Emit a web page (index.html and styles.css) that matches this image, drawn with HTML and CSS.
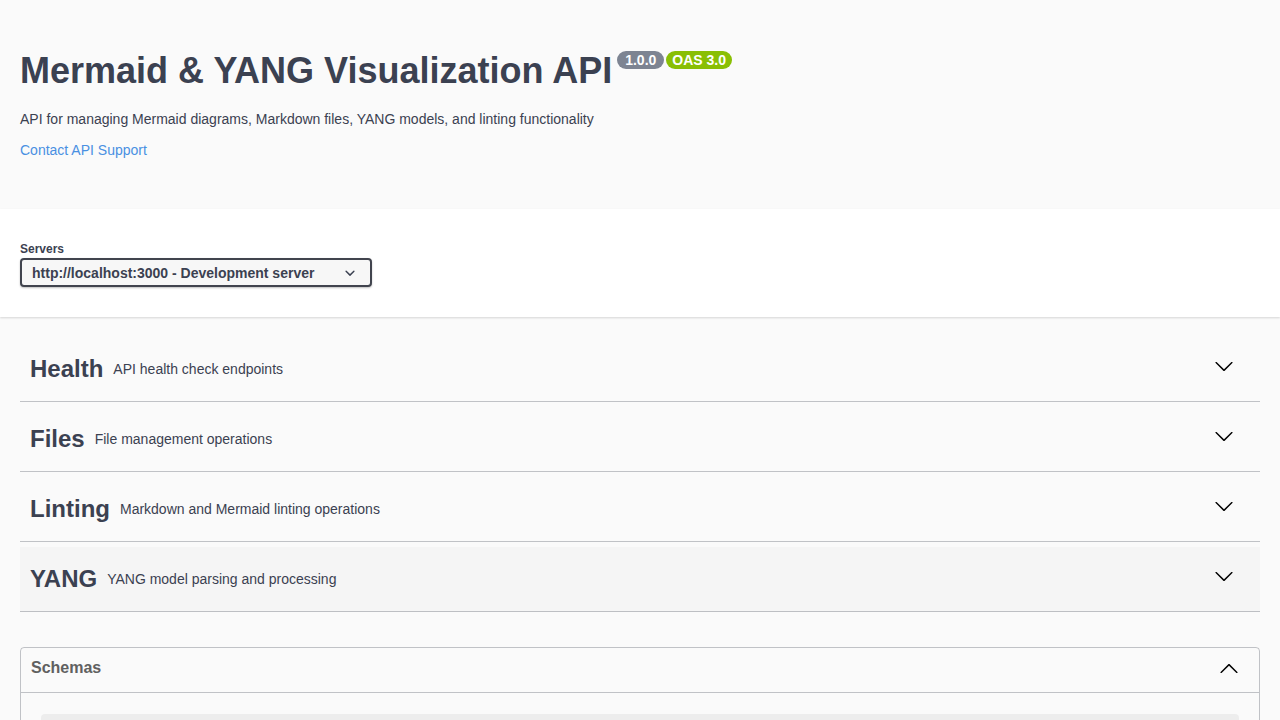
FILE: index.html
```html
<!DOCTYPE html>
<html lang="en">
<head>
<meta charset="utf-8">
<title>Mermaid &amp; YANG Visualization API</title>
<link rel="stylesheet" href="styles.css">
</head>
<body>
<div class="swagger">
  <section class="info wrapper">
    <hgroup class="main">
      <h1 class="title">Mermaid &amp; YANG Visualization API<small class="badge"><pre>1.0.0</pre></small><small class="badge oas"><pre>OAS 3.0</pre></small></h1>
    </hgroup>
    <p class="description">API for managing Mermaid diagrams, Markdown files, YANG models, and linting functionality</p>
    <div class="contact"><a class="link" href="#">Contact API Support</a></div>
  </section>

  <section class="scheme-container">
    <div class="wrapper">
      <label class="servers">
        <span class="servers-title">Servers</span>
        <span class="select-wrap">
          <select class="server-select">
            <option>http://localhost:3000 - Development server</option>
          </select>
          <svg class="select-arrow" width="20" height="20" viewBox="0 0 20 20"><path d="M13.418 7.859a.695.695 0 01.978 0 .68.68 0 010 .969l-3.908 3.83a.697.697 0 01-.979 0l-3.908-3.830a.68.68 0 010-.969.695.695 0 01.978 0L10 11z" fill="#3b4151"/></svg>
        </span>
      </label>
    </div>
  </section>

  <section class="wrapper operations">
    <div class="tag-section">
      <h3 class="tag">
        <span class="tag-name">Health</span><small class="tag-desc">API health check endpoints</small>
        <button class="expand" aria-label="expand"><svg width="20" height="20" viewBox="0 0 20 20"><path d="M17.418 6.109c.272-.268.709-.268.979 0s.271.701 0 .969l-7.908 7.83c-.27.268-.707.268-.979 0l-7.908-7.830c-.27-.268-.27-.701 0-.969.271-.268.709-.268.979 0L10 13.25l7.418-7.141z"/></svg></button>
      </h3>
    </div>
    <div class="tag-section">
      <h3 class="tag">
        <span class="tag-name">Files</span><small class="tag-desc">File management operations</small>
        <button class="expand" aria-label="expand"><svg width="20" height="20" viewBox="0 0 20 20"><path d="M17.418 6.109c.272-.268.709-.268.979 0s.271.701 0 .969l-7.908 7.83c-.27.268-.707.268-.979 0l-7.908-7.830c-.27-.268-.27-.701 0-.969.271-.268.709-.268.979 0L10 13.25l7.418-7.141z"/></svg></button>
      </h3>
    </div>
    <div class="tag-section">
      <h3 class="tag">
        <span class="tag-name">Linting</span><small class="tag-desc">Markdown and Mermaid linting operations</small>
        <button class="expand" aria-label="expand"><svg width="20" height="20" viewBox="0 0 20 20"><path d="M17.418 6.109c.272-.268.709-.268.979 0s.271.701 0 .969l-7.908 7.83c-.27.268-.707.268-.979 0l-7.908-7.830c-.27-.268-.27-.701 0-.969.271-.268.709-.268.979 0L10 13.25l7.418-7.141z"/></svg></button>
      </h3>
    </div>
    <div class="tag-section">
      <h3 class="tag hovered">
        <span class="tag-name">YANG</span><small class="tag-desc">YANG model parsing and processing</small>
        <button class="expand" aria-label="expand"><svg width="20" height="20" viewBox="0 0 20 20"><path d="M17.418 6.109c.272-.268.709-.268.979 0s.271.701 0 .969l-7.908 7.83c-.27.268-.707.268-.979 0l-7.908-7.830c-.27-.268-.27-.701 0-.969.271-.268.709-.268.979 0L10 13.25l7.418-7.141z"/></svg></button>
      </h3>
    </div>

    <div class="models">
      <h4 class="models-head">
        <span class="models-title">Schemas</span>
        <svg width="20" height="20" viewBox="0 0 20 20"><path d="M17.418 14.908c.272.268.709.268.979 0s.271-.701 0-.969l-7.908-7.83c-.27-.268-.707-.268-.979 0l-7.908 7.83c-.27.268-.27.701 0 .969.271.268.709.268.979 0L10 7.767l7.418 7.141z"/></svg>
      </h4>
      <div class="models-body">
        <div class="model-container"></div>
        <div class="model-container"></div>
        <div class="model-container"></div>
      </div>
    </div>
  </section>
</div>
</body>
</html>
```

FILE: styles.css
```css
html, body {
  margin: 0;
  padding: 0;
}
body {
  background: #fafafa;
  font-family: "Liberation Sans", Arial, Helvetica, sans-serif;
  color: #3b4151;
}
.wrapper {
  box-sizing: border-box;
  max-width: 1460px;
  margin: 0 auto;
  padding: 0 20px;
}

/* Info */
.info {
  padding-top: 50px;
  padding-bottom: 50px;
}
.info hgroup.main {
  margin: 0;
}
.title {
  margin: 0;
  font-size: 36px;
  line-height: 42px;
  font-weight: 700;
  color: #3b4151;
}
.badge {
  display: inline-block;
  vertical-align: top;
  margin: 1px 0 0 5px;
  padding: 2px 8px;
  border-radius: 57px;
  background: #7d8492;
}
.badge.oas {
  background: #89bf04;
  margin-left: 2px;
  padding: 2px 6px;
}
.badge pre {
  margin: 0;
  padding: 0;
  font-family: "Liberation Sans", Arial, Helvetica, sans-serif;
  font-size: 14px;
  line-height: 14px;
  font-weight: 700;
  color: #fff;
}
.description {
  margin: 17px 0 0;
  font-size: 14px;
  line-height: 21px;
}
.contact {
  margin-top: 12px;
  font-size: 14px;
  line-height: 17px;
}
.link {
  color: #4990e2;
  text-decoration: none;
}

/* Servers */
.scheme-container {
  background: #fff;
  box-shadow: 0 1px 2px 0 rgba(0, 0, 0, 0.15);
  padding: 30px 0;
  margin: 0 0 20px;
}
.servers {
  display: flex;
  flex-direction: column;
  align-items: flex-start;
  gap: 1px;
}
.servers-title {
  margin-top: 3px;
  font-size: 12px;
  line-height: 15px;
  font-weight: 700;
  color: #3b4151;
}
.select-wrap {
  position: relative;
  display: inline-block;
}
.server-select {
  appearance: none;
  -webkit-appearance: none;
  display: block;
  width: 352px;
  height: 29px;
  background: #f7f7f7;
  border: 2px solid #41444e;
  border-radius: 4px;
  box-shadow: 0 1px 2px 0 rgba(0, 0, 0, 0.25);
  font-family: "Liberation Sans", Arial, Helvetica, sans-serif;
  font-size: 14px;
  font-weight: 700;
  color: #3b4151;
  padding: 0 40px 0 10px;
  margin: 0;
}
.select-arrow {
  position: absolute;
  right: 12px;
  top: 5px;
  pointer-events: none;
}

/* Tags */
.tag-section {
  display: flex;
  flex-direction: column;
}
.tag {
  display: flex;
  align-items: center;
  height: 64px;
  margin: 0 0 5px;
  padding: 0 20px 0 10px;
  border-bottom: 1px solid rgba(59, 65, 81, 0.3);
  font-size: 24px;
  font-weight: 700;
  color: #3b4151;
  cursor: pointer;
}
.tag.hovered {
  background: rgba(0, 0, 0, 0.02);
}
.tag-name {
  line-height: 28px;
}
.tag-desc {
  flex: 1;
  padding: 0 10px;
  font-size: 14px;
  line-height: 16px;
  font-weight: 400;
  color: #3b4151;
}
.expand {
  display: flex;
  background: none;
  border: none;
  padding: 0 6px 6px;
  margin: 0;
  cursor: pointer;
}
.expand svg {
  display: block;
}

/* Models */
.models {
  margin: 30px 0;
  border: 1px solid rgba(59, 65, 81, 0.3);
  border-radius: 4px;
}
.models-head {
  display: flex;
  align-items: center;
  justify-content: space-between;
  margin: 0;
  padding: 8px 20px 12px 10px;
  height: 24px;
  border-bottom: 1px solid rgba(59, 65, 81, 0.3);
  font-size: 16px;
  font-weight: 700;
  color: #606060;
}
.models-head svg {
  display: block;
}
.models-body {
  padding: 21px 0 20px;
}
.model-container {
  height: 50px;
  margin: 0 20px 15px;
  background: rgba(0, 0, 0, 0.05);
  border-radius: 4px;
}
```
